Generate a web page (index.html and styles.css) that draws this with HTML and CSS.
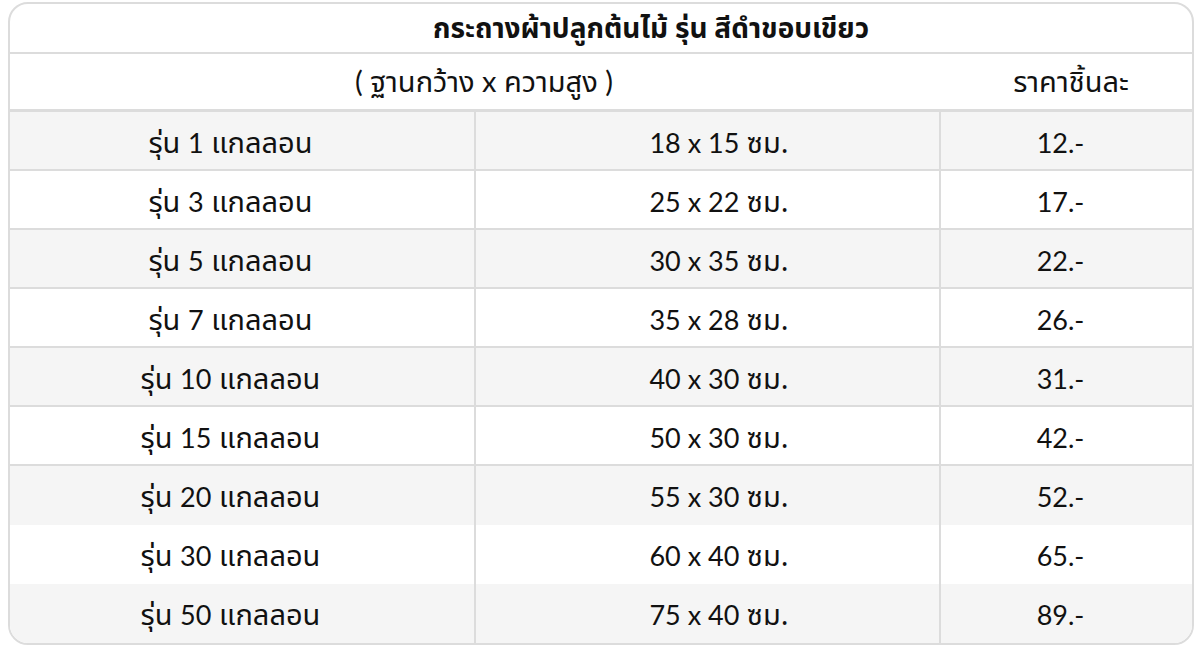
FILE: index.html
```html
<!DOCTYPE html>
<html lang="th">
<head>
<meta charset="utf-8">
<title>กระถางผ้าปลูกต้นไม้</title>
<link rel="stylesheet" href="styles.css">
</head>
<body>
<div class="price-table">
  <div class="title-row">กระถางผ้าปลูกต้นไม้ รุ่น สีดำขอบเขียว</div>
  <div class="head-row">
    <div class="head-size">( ฐานกว้าง x ความสูง )</div>
    <div class="head-price">ราคาชิ้นละ</div>
  </div>
  <div class="row alt"><div class="cell c1">รุ่น <span class="num">1</span> แกลลอน</div><div class="cell c2"><span class="num">18 x 15</span> ซม.</div><div class="cell c3"><span class="num">12.-</span></div></div>
  <div class="row"><div class="cell c1">รุ่น <span class="num">3</span> แกลลอน</div><div class="cell c2"><span class="num">25 x 22</span> ซม.</div><div class="cell c3"><span class="num">17.-</span></div></div>
  <div class="row alt"><div class="cell c1">รุ่น <span class="num">5</span> แกลลอน</div><div class="cell c2"><span class="num">30 x 35</span> ซม.</div><div class="cell c3"><span class="num">22.-</span></div></div>
  <div class="row"><div class="cell c1">รุ่น <span class="num">7</span> แกลลอน</div><div class="cell c2"><span class="num">35 x 28</span> ซม.</div><div class="cell c3"><span class="num">26.-</span></div></div>
  <div class="row alt"><div class="cell c1">รุ่น <span class="num">10</span> แกลลอน</div><div class="cell c2"><span class="num">40 x 30</span> ซม.</div><div class="cell c3"><span class="num">31.-</span></div></div>
  <div class="row"><div class="cell c1">รุ่น <span class="num">15</span> แกลลอน</div><div class="cell c2"><span class="num">50 x 30</span> ซม.</div><div class="cell c3"><span class="num">42.-</span></div></div>
  <div class="row alt plain"><div class="cell c1">รุ่น <span class="num">20</span> แกลลอน</div><div class="cell c2"><span class="num">55 x 30</span> ซม.</div><div class="cell c3"><span class="num">52.-</span></div></div>
  <div class="row plain"><div class="cell c1">รุ่น <span class="num">30</span> แกลลอน</div><div class="cell c2"><span class="num">60 x 40</span> ซม.</div><div class="cell c3"><span class="num">65.-</span></div></div>
  <div class="row alt plain"><div class="cell c1">รุ่น <span class="num">50</span> แกลลอน</div><div class="cell c2"><span class="num">75 x 40</span> ซม.</div><div class="cell c3"><span class="num">89.-</span></div></div>
</div>
</body>
</html>
```
FILE: styles.css
```css
html, body {
  margin: 0;
  padding: 0;
  background: #ffffff;
}
body {
  font-family: Lato, "Noto Sans Thai", "Noto Sans", sans-serif;
  color: #111111;
  font-size: 29px;
}
.price-table {
  margin: 2px 0 0 8px;
  width: 1186px;
  box-sizing: border-box;
  border: 2px solid #dcdcdc;
  border-radius: 20px;
  overflow: hidden;
}
.title-row {
  height: 50px;
  box-sizing: border-box;
  border-bottom: 2px solid #dcdcdc;
  display: flex;
  align-items: center;
  justify-content: center;
  padding-left: 100px;
  padding-top: 2px;
  font-weight: 700;
  font-size: 28px;
}
.head-row {
  height: 58px;
  box-sizing: border-box;
  border-bottom: 3px solid #dcdcdc;
  display: grid;
  grid-template-columns: 932px 1fr;
  align-items: center;
  padding-top: 3px;
}
.head-size {
  text-align: center;
  padding-left: 16px;
}
.head-price {
  text-align: center;
  padding-left: 8px;
}
.row {
  height: 59px;
  box-sizing: border-box;
  border-bottom: 2px solid #dcdcdc;
  display: grid;
  grid-template-columns: 466px 465px 1fr;
}
.row.plain {
  border-bottom: none;
}
.row.alt {
  background: #f5f5f5;
}
.cell {
  text-align: center;
  font-family: "Noto Sans Thai", "Noto Sans", sans-serif;
  font-size: 29px;
  line-height: 57px;
  padding-top: 2px;
  white-space: pre;
}
.num {
  font-family: Lato, "Noto Sans", sans-serif;
  font-size: 27px;
}
.c1 {
  border-right: 2px solid #dcdcdc;
  padding-right: 23px;
}
.c2 {
  border-right: 2px solid #dcdcdc;
  padding-left: 23px;
}
.c3 {
  padding-right: 12px;
}
```
